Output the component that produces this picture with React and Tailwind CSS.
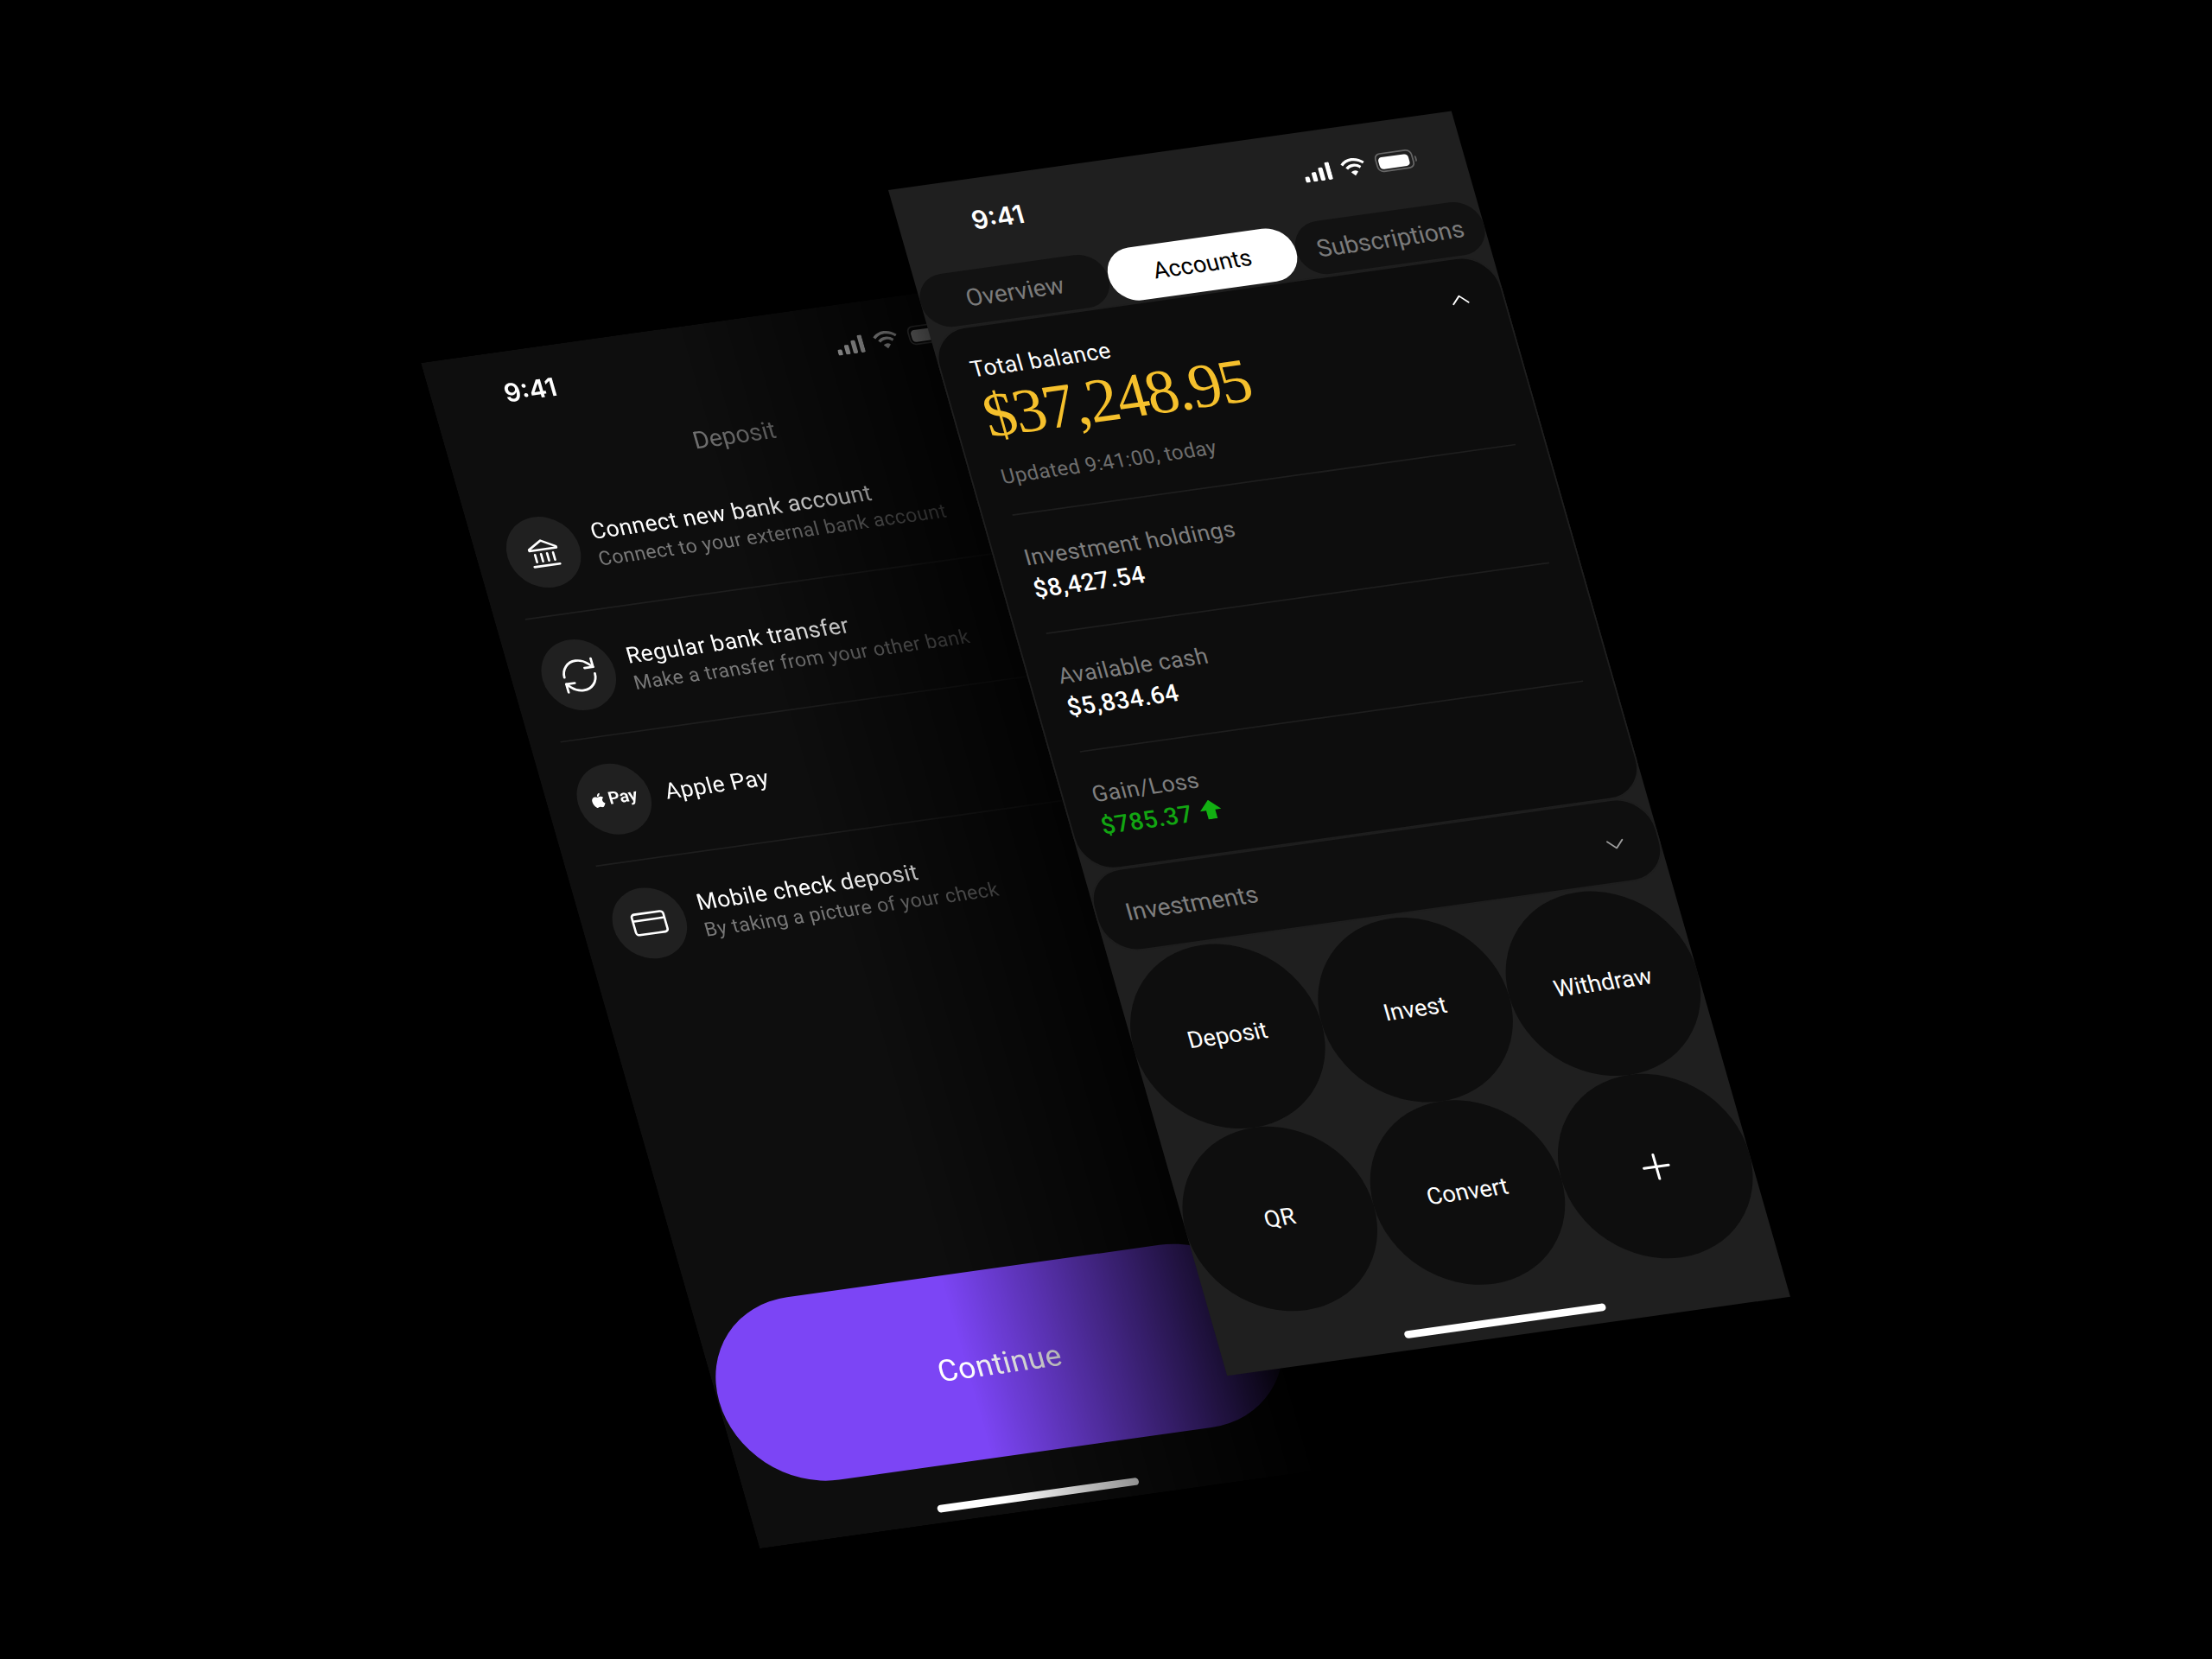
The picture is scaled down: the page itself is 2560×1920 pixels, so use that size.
import React from "react";
import { ChevronUp, ChevronDown, Plus, RefreshCw } from "lucide-react";
import { FaApple } from "react-icons/fa";

function StatusBar() {
  return (
    <div className="flex h-[54px] items-center justify-between pl-[48px] pr-[31px] pt-[1px]">
      <span className="font-['Inter',sans-serif] text-[17px] font-semibold leading-[22px] text-white">9:41</span>
      <div className="flex items-center gap-[6px]">
        <svg width="18" height="12" viewBox="0 0 18 12" fill="#fff">
          <rect x="0" y="8" width="3" height="4" rx="1" />
          <rect x="5" y="5.5" width="3" height="6.5" rx="1" />
          <rect x="10" y="3" width="3" height="9" rx="1" />
          <rect x="15" y="0" width="3" height="12" rx="1" />
        </svg>
        <svg width="18" height="13" viewBox="0 0 17 12" fill="#fff">
          <path d="M8.5 2.4c2.4 0 4.6.9 6.2 2.5l1.2-1.2A10.6 10.6 0 0 0 8.5.6C5.7.6 3 1.7 1.1 3.7l1.2 1.2a8.8 8.8 0 0 1 6.2-2.5Z" />
          <path d="M8.5 6.1c1.4 0 2.7.5 3.7 1.5l1.2-1.3a7 7 0 0 0-9.8 0l1.2 1.3c1-1 2.3-1.5 3.7-1.5Z" />
          <path d="M8.5 8.6c-.9 0-1.6.3-2.2.9l2.2 2.3 2.2-2.3c-.6-.6-1.3-.9-2.2-.9Z" />
        </svg>
        <div className="flex items-center gap-[1px]">
          <div className="h-[13px] w-[25px] rounded-[4px] border border-[#666] p-[1.5px]">
            <div className="h-full w-full rounded-[2.5px] bg-white" />
          </div>
          <div className="h-[4px] w-[1.5px] rounded-r-full bg-[#666]" />
        </div>
      </div>
    </div>
  );
}

function HomeBar() {
  return <div className="mx-auto h-[5px] w-[134px] rounded-full bg-white" />;
}

function BankIcon() {
  return (
    <svg width="24" height="24" viewBox="0 0 24 24" fill="none" stroke="#fff" strokeWidth="1.5" strokeLinecap="round" strokeLinejoin="round">
      <path d="M3 9.2 12 4l9 5.2v.8H3v-.8Z" />
      <path d="M6 13v5M10 13v5M14 13v5M18 13v5" />
      <path d="M3.5 21h17" />
    </svg>
  );
}

function CardIcon() {
  return (
    <svg width="24" height="24" viewBox="0 0 24 24" fill="none" stroke="#fff" strokeWidth="1.5" strokeLinejoin="round">
      <rect x="1.5" y="5" width="21" height="14" rx="2" />
      <path d="M1.5 9.5h21" />
    </svg>
  );
}

function DepositRow({ icon, title, sub, last }) {
  return (
    <div className={last ? "mx-5 flex h-[84.5px] items-center gap-[10px]" : "mx-5 flex h-[84.5px] items-center gap-[10px] border-b border-[#1e1e1e]"}>
      <div className="flex h-[48px] w-[48px] shrink-0 items-center justify-center rounded-full bg-[#202020]">{icon}</div>
      <div className="flex flex-col whitespace-nowrap pt-[1px] tracking-[0.25px]">
        <span className="text-[15px] leading-[20px] text-white">{title}</span>
        {sub && <span className="text-[13px] leading-[18px] text-[#787878]">{sub}</span>}
      </div>
    </div>
  );
}

function LeftPhone() {
  return (
    <div className="absolute left-[487px] top-[420px] flex h-[812px] w-[375px] origin-top-left flex-col bg-[#0e0e0e] [transform:matrix(1.738,-0.244,0.483,1.69,0,0)] [mask-image:linear-gradient(to_right,#000_44%,transparent_100%)]">
      <StatusBar />
      <div className="h-[40px] pt-[11px] text-center text-[16px] leading-[24px] text-[#6f6f6f]">Deposit</div>
      <DepositRow icon={<BankIcon />} title="Connect new bank account" sub="Connect to your external bank account" />
      <DepositRow icon={<RefreshCw size={27} color="#fff" strokeWidth={1.4} />} title="Regular bank transfer" sub="Make a transfer from your other bank" />
      <DepositRow
        icon={
          <span className="flex items-center gap-[1px] text-[11.5px] font-semibold leading-none text-white">
            <FaApple size={11} color="#fff" />
            Pay
          </span>
        }
        title="Apple Pay"
      />
      <DepositRow icon={<CardIcon />} title="Mobile check deposit" sub="By taking a picture of your check" last />
      <div className="mx-[1px] mt-auto flex h-[125px] items-center justify-center rounded-[62.5px] bg-[#7c45f5] text-[20px] tracking-[0.3px] text-white">Continue</div>
      <div className="mb-[7px] mt-[26px]">
        <HomeBar />
      </div>
    </div>
  );
}

function Tab({ label, active }) {
  return (
    <div
      className={
        active
          ? "relative z-10 flex h-[36px] items-center justify-center rounded-[18px] bg-white pt-[2px] text-[15.5px] text-black"
          : "flex h-[36px] items-center justify-center rounded-[18px] bg-[#121212] pt-[1px] text-[16px] text-[#7b7b7b]"
      }
    >
      {label}
    </div>
  );
}

function Stat({ label, value, green }) {
  return (
    <div className="h-[81px] border-b border-[#1e1e1e] pt-[19px] last:border-b-0">
      <div className="text-[15px] leading-[20px] tracking-[0.25px] text-[#7f7f7f]">{label}</div>
      <div className={green ? "mt-[2px] flex items-center gap-[5px] text-[16px] font-medium leading-[20px] tracking-[0.25px] text-[#12a512]" : "mt-[2px] text-[16px] font-medium leading-[20px] tracking-[0.25px] text-white"}>
        {value}
        {green && (
          <svg width="14" height="13" viewBox="0 0 14 13" className="mb-[3px]" fill="#12b012">
            <path d="M7 0 14 7H10V13H4V7H0Z" />
          </svg>
        )}
      </div>
    </div>
  );
}

function Circle({ children }) {
  return <div className="flex h-[125px] items-center justify-center rounded-full bg-[#0e0e0e] pt-[1px] text-[15.5px] text-white">{children}</div>;
}

function RightPhone() {
  return (
    <div className="absolute left-[1028px] top-[220px] h-[812px] w-[375px] origin-top-left bg-[#1f1f1f] [transform:matrix(1.738,-0.244,0.483,1.69,0,0)]">
      <StatusBar />
      <div className="mt-[6px] grid h-[36px] grid-cols-3">
        <Tab label="Overview" />
        <Tab label="Accounts" active />
        <Tab label="Subscriptions" />
      </div>
      <div className="relative mt-[1px] h-[371px] w-[375px] rounded-[24px] border border-[#1e1e1e] bg-[#0d0d0d] px-[19px] pt-[18px]">
        <ChevronUp size={20} color="#fff" strokeWidth={1.25} className="absolute right-[18px] top-[17px]" />
        <div className="h-[110px] border-b border-[#1e1e1e]">
          <div className="text-[15px] leading-[20px] tracking-[0.25px] text-white">Total balance</div>
          <div className="font-['Liberation_Serif',serif] text-[42px] leading-[44px] tracking-[-1.3px] text-[#f5c02c]">$37,248.95</div>
          <div className="mt-[9px] text-[13.5px] leading-[20px] tracking-[0.25px] text-[#6e6e6e]">Updated 9:41:00, today</div>
        </div>
        <Stat label="Investment holdings" value="$8,427.54" />
        <Stat label="Available cash" value="$5,834.64" />
        <Stat label="Gain/Loss" value="$785.37" green />
      </div>
      <div className="relative flex h-[56px] w-[375px] items-center justify-between rounded-[24px] border border-[#1e1e1e] bg-[#0f0f0f] pl-[19px] pr-[18px] pt-[3px] text-[16px] text-[#7f7f7f]">
        Investments
        <ChevronDown size={20} color="#9a9a9a" strokeWidth={1.25} />
      </div>
      <div className="mt-[2px] grid grid-cols-3">
        <Circle>Deposit</Circle>
        <Circle>Invest</Circle>
        <Circle>Withdraw</Circle>
        <Circle>QR</Circle>
        <Circle>Convert</Circle>
        <Circle>
          <Plus size={28} color="#fff" strokeWidth={1.5} />
        </Circle>
      </div>
      <div className="mt-[23px]">
        <HomeBar />
      </div>
    </div>
  );
}

export default function App() {
  return (
    <div className="relative h-[1920px] w-[2560px] overflow-hidden bg-black font-['Roboto',sans-serif]">
      <LeftPhone />
      <RightPhone />
    </div>
  );
}
